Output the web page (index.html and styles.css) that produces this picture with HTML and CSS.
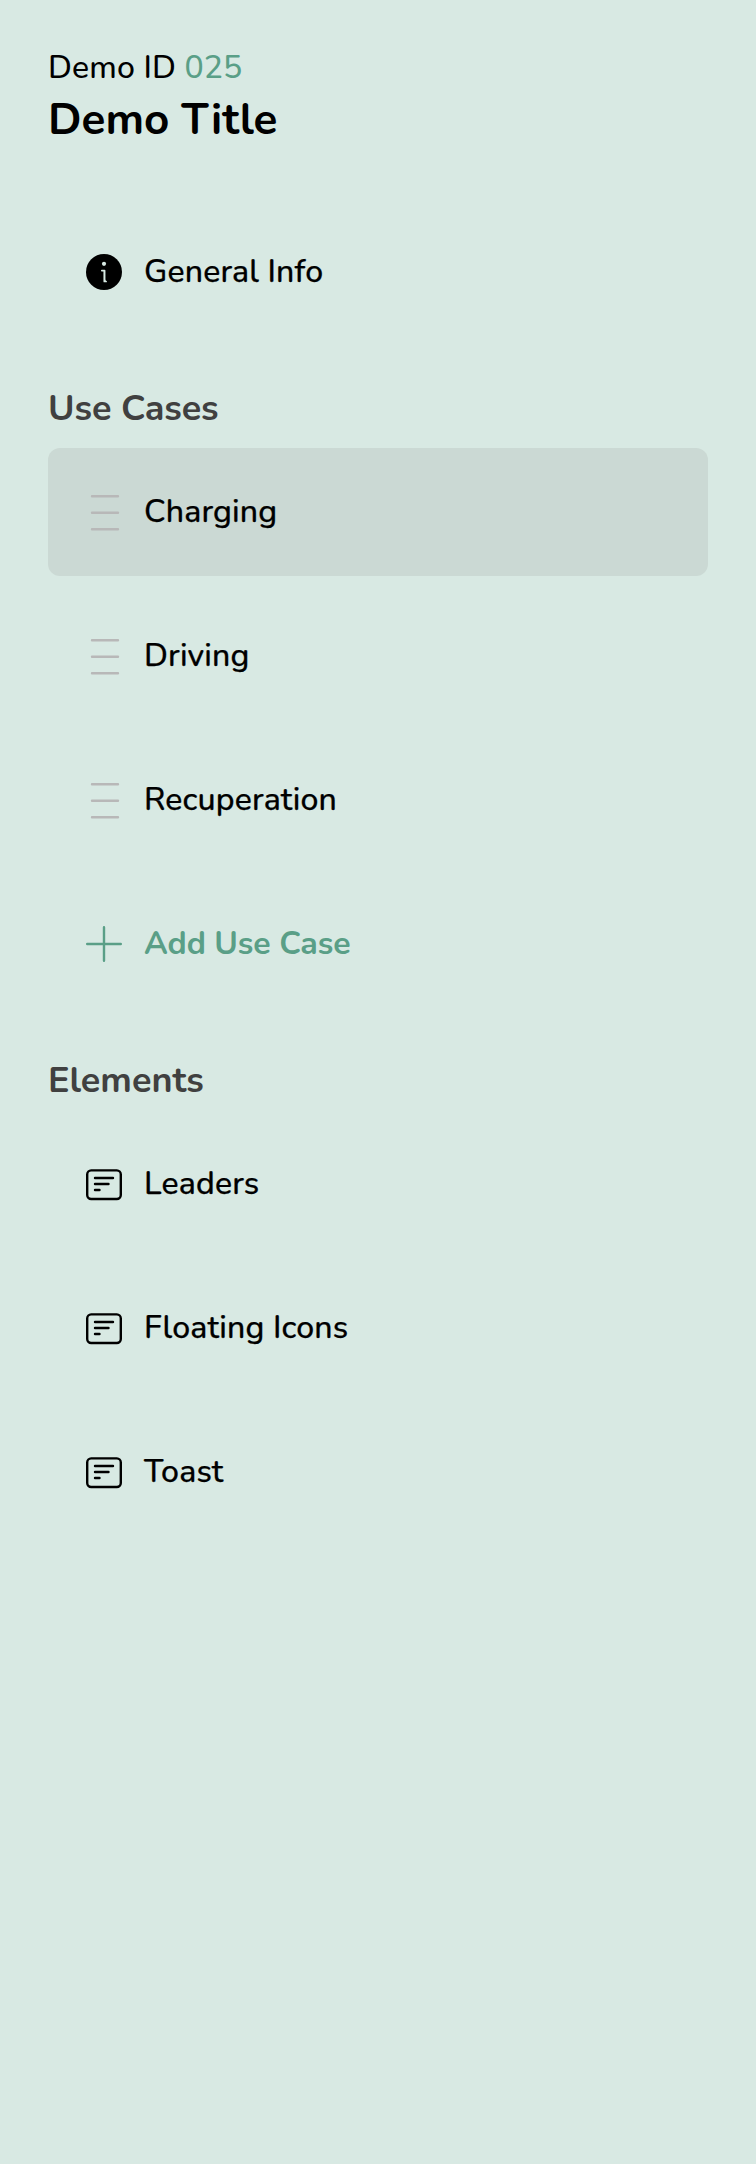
FILE: index.html
```html
<!DOCTYPE html>
<html lang="en">
<head>
<meta charset="utf-8">
<title>Demo Title</title>
<link rel="stylesheet" href="styles.css">
</head>
<body>
<svg class="defs" aria-hidden="true">
  <symbol id="grip" viewBox="0 0 36 36" overflow="visible"><path d="M6 2.2h26M6 18.7h26M6 35.2h26" fill="none" stroke="currentColor" stroke-width="2.4" stroke-linecap="round"/></symbol>
  <symbol id="note" viewBox="0 0 36 36"><g fill="none" stroke="currentColor" stroke-width="2.4" stroke-linecap="round"><rect x="1.2" y="4.4" width="33.6" height="28.6" rx="4"/><path d="M9 12h18M9 18h13.5M9 24h4.5"/></g></symbol>
</svg>
<nav class="sidebar">
  <header class="header">
    <div class="demo-id">Demo ID <span class="number">025</span></div>
    <h1 class="title">Demo Title</h1>
  </header>
  <a class="item"><svg class="icon" viewBox="0 0 36 36"><circle cx="18" cy="18" r="18"/><circle cx="18" cy="9.8" r="2.1" fill="#d8e9e3"/><path d="M15.8 16.6h2.8v8.6q0 2.3 1.5 2.3h-1.8v-10" fill="none" stroke="#d8e9e3" stroke-width="1.7" stroke-linecap="round" stroke-linejoin="round"/></svg><span>General Info</span></a>
  <section class="group">
    <h2 class="heading cases">Use Cases</h2>
    <a class="item active"><svg class="icon grip"><use href="#grip"/></svg><span>Charging</span></a>
    <a class="item"><svg class="icon grip"><use href="#grip"/></svg><span>Driving</span></a>
    <a class="item"><svg class="icon grip"><use href="#grip"/></svg><span>Recuperation</span></a>
    <a class="item add"><svg class="icon" viewBox="0 0 36 36"><path d="M1.2 18h33.6M18 1.2v33.6" fill="none" stroke="currentColor" stroke-width="2.4" stroke-linecap="round"/></svg><span>Add Use Case</span></a>
  </section>
  <section class="group">
    <h2 class="heading">Elements</h2>
    <a class="item"><svg class="icon"><use href="#note"/></svg><span>Leaders</span></a>
    <a class="item"><svg class="icon"><use href="#note"/></svg><span>Floating Icons</span></a>
    <a class="item"><svg class="icon"><use href="#note"/></svg><span>Toast</span></a>
  </section>
</nav>
</body>
</html>
```
FILE: styles.css
```css
* { box-sizing: border-box; }
body {
  margin: 0;
  background: #d8e9e3;
  color: #000;
  font-family: Nunito, Lato, sans-serif;
  font-size: 32px;
  font-weight: 500;
  line-height: 44px;
}
.defs { display: none; }
.sidebar { min-height: 2164px; padding: 46px 48px 0; }
.header { height: 162px; }
.demo-id { letter-spacing: 0.12px; }
.number { color: #5a9f87; }
.title { margin: 0; font-size: 44px; line-height: 60px; font-weight: 700; }
.group { margin-top: 48px; }
.heading {
  margin: 0 0 15px;
  font-size: 36px;
  line-height: 49px;
  font-weight: 700;
  color: #404040;
}
.cases { letter-spacing: -0.12px; }
.item {
  display: flex;
  align-items: center;
  gap: 22px;
  height: 128px;
  padding-left: 38px;
  border-radius: 12px;
  letter-spacing: 0.15px;
  white-space: nowrap;
}
.item span { -webkit-text-stroke: 0.25px; }
.item + .item { margin-top: 16px; }
.active { background: #cbd9d4; }
.icon { width: 36px; height: 36px; flex: none; overflow: visible; }
.grip { color: #b8b8b8; }
.add { color: #5a9f87; font-weight: 700; letter-spacing: -0.1px; }
.item.add span { -webkit-text-stroke: 0; }
```
